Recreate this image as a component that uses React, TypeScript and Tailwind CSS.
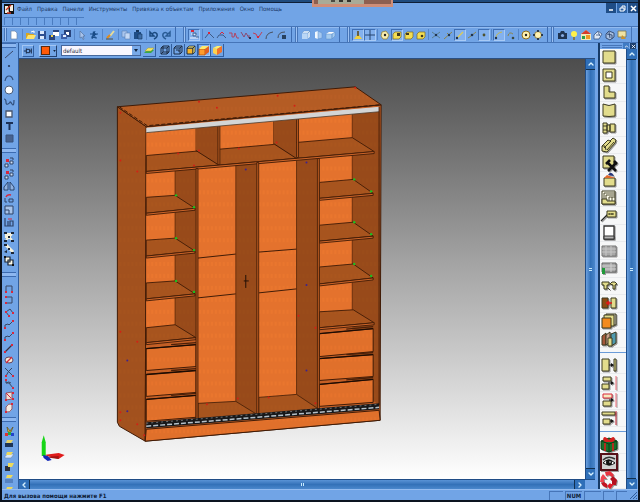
import { type ReactNode } from 'react';
import { clsx } from 'clsx';
import { ChevronDown, ChevronLeft, ChevronRight, ChevronUp } from 'lucide-react';

const menuItems = [
  'Файл',
  'Правка',
  'Панели',
  'Инструменты',
  'Привязка к объектам',
  'Приложения',
  'Окно',
  'Помощь',
];

const NAVY = '#1d3557';
const RED = '#d8283c';
const GOLD = '#f0d040';
const SAND = '#e2dc8c';
const EDGE = '#3c3a20';

// 12x12 toolbar glyphs
const icons: Record<string, ReactNode> = {
  new: <path d="M3 2h4l2 2v6H3z" fill="#fff" stroke="#6b86ab" strokeWidth=".7" />,
  open: (
    <>
      <path d="M2 4h3l1 1h4v5H2z" fill="#d8a520" />
      <path d="M4 6h8l-2 4H2z" fill="#ffe36b" />
      <path d="M7 3l3-1v2" stroke="#fff" fill="none" />
    </>
  ),
  save: (
    <>
      <path d="M2 2h8v8H2z" fill="#2c4e91" />
      <path d="M4 2h4v3H4zM4 7h4v3H4z" fill="#dce8fa" />
    </>
  ),
  saveAs: (
    <>
      <path d="M5 1h6v6H5z" fill="#fff" />
      <path d="M5 1h6v2H5z" fill="#28447c" />
      <path d="M1 6h6v5H1z" fill="#28447c" />
      <path d="M3 6h2v2H3z" fill={GOLD} />
    </>
  ),
  saveAll: (
    <>
      <path d="M4 1h7v7H4z" fill="#28447c" />
      <path d="M6 3h3v3H6z" fill="#fff" />
      <path d="M1 5h6v5H1z" fill="#3c5fa8" />
      <path d="M3 6h3v2H3z" fill="#eaf2ff" />
    </>
  ),
  cursor: <path d="M4 2l5 5H7l1 3-1 .5L6 8 4 9z" fill="#a9c4ec" stroke="#4e6b97" strokeWidth=".6" />,
  select: (
    <>
      <path d="M5 2l4 4-2 0 1 4-2-3-2 2z" fill="#184a86" />
      <path d="M2 5h8M7 2L4 10M3 8l6 1" stroke="#184a86" fill="none" />
    </>
  ),
  brush: (
    <>
      <path d="M10 2L6 7" stroke="#e8dc9a" strokeWidth="2" />
      <path d="M6 6L3 9" stroke="#e08b1e" strokeWidth="2.200" />
      <path d="M2 10h7" stroke="#473a20" strokeWidth=".8" />
    </>
  ),
  copy: (
    <>
      <path d="M2 2h5v6H2z" fill="#a8c5ee" stroke="#5d80b4" strokeWidth=".6" />
      <path d="M5 4h5v6H5z" fill="#c3d8f5" stroke="#5d80b4" strokeWidth=".6" />
    </>
  ),
  paste: (
    <>
      <path d="M2 3h7v7H2z" fill="#1e4d86" />
      <path d="M4 1h3v2H4z" fill="#16375f" />
      <path d="M6 5h4v5H6z" fill="#3f6ea8" stroke="#123257" strokeWidth=".6" />
    </>
  ),
  undo: <path d="M2 3v4h4zM4 5q3-3 5 0q1 3-3 5" fill="none" stroke="#1b4a80" strokeWidth="1.500" />,
  redo: <path d="M10 3v4H6zM8 5Q5 2 3 5q-1 3 3 5" fill="none" stroke="#2a5c96" strokeWidth="1.500" />,
  snapBar: (
    <>
      <path d="M2 9h8M3 5h3l3 2" stroke="#eef4ff" fill="none" />
      <path d="M5 4h3v3H5zM8 8h3" stroke="#36537f" fill="none" strokeWidth=".8" />
      <path d="M3 1h3v2H3z" fill={RED} />
    </>
  ),
  poly1: <><path d="M1 9l4-5 5 5" stroke="#3f5a86" fill="none" /><path d="M4 3h2v2H4z" fill={RED} /></>,
  poly2: <><path d="M1 9l2-3 2 0 2 0 3 3" stroke="#3f5a86" fill="none" /><path d="M4 5l2-2 2 2" stroke={RED} fill="none" /></>,
  poly3: <path d="M1 4l3 0v4h2l1-4 2 5h2" stroke="#b24562" fill="none" />,
  poly4: <><path d="M1 3l3 5 2-4 3 5V6" stroke="#8a4a70" fill="none" /><path d="M9 8h2v2H9z" fill={NAVY} /></>,
  poly5: <><path d="M1 4l3 1 2 4 4-6" stroke="#c04058" fill="none" /><path d="M5 7h2v2H5z" fill={RED} /></>,
  arc1: <path d="M2 10q0-6 7-7" stroke="#49515f" fill="none" />,
  arc2: <><path d="M2 9q0-6 7-6" stroke="#49515f" fill="none" /><path d="M6 6h4v4H6z" fill="#27415f" /></>,
  box1: (
    <>
      <path d="M2 4h6v6H2z" fill="#b9d6f6" />
      <path d="M2 4l2-2h6L8 4zM10 2v6l-2 2V4z" fill="#f2f9ff" stroke="#5a8cc8" strokeWidth=".5" />
    </>
  ),
  box2: (
    <>
      <path d="M3 3l3-1v8l-3-1z" fill="#f2f9ff" />
      <path d="M6 2l4 2v5l-4 1z" fill="#a5c8f0" stroke="#5a8cc8" strokeWidth=".5" />
    </>
  ),
  box3: (
    <>
      <path d="M2 5l3-2h6L8 5z" fill="#fff" />
      <path d="M2 5h6v5H2zM11 3v4l-3 3V5z" fill="#a5cbf0" stroke="#5a8cc8" strokeWidth=".5" />
    </>
  ),
  person: <><path d="M2 10h8L7 6H5z" fill={GOLD} /><path d="M6 2v5" stroke="#5b4b20" strokeWidth="1.600" /></>,
  plus: <path d="M6 1v10M1 6h10" stroke="#27456f" />,
  snapDot: <><path d="M3 3l4-1 3 4-2 4H4L2 7z" fill="#f6edb0" stroke="#8f7a22" strokeWidth=".7" /><circle cx="6" cy="6" r="1.200" fill="#222" /></>,
  snapCube: (
    <>
      <path d="M2 5l2-2h6v5l-2 2H2z" fill="#f3dd53" stroke="#7d6b20" strokeWidth=".7" />
      <path d="M6 4h3v3H6z" fill="#413a1e" />
    </>
  ),
  snapEdge: (
    <>
      <path d="M2 5l2-2h6v5l-2 2H2z" fill="#f3dd53" stroke="#7d6b20" strokeWidth=".7" />
      <path d="M3 4h3v2H3z" fill="#413a1e" />
    </>
  ),
  snapFace: (
    <>
      <path d="M2 5l2-2h6v5l-2 2H2z" fill="#f3dd53" stroke="#7d6b20" strokeWidth=".7" />
      <circle cx="7" cy="7" r="1.300" fill="#413a1e" />
    </>
  ),
  cross: <><path d="M2 3l8 6M10 3L2 9" stroke="#5c7f8c" /><circle cx="6" cy="6" r="1.200" fill="#20344f" /></>,
  perp: <><path d="M2 10l8-7M5 4l3 3" stroke="#8f8548" /><circle cx="7" cy="6" r="1.200" fill="#20344f" /></>,
  seg: <><path d="M3 9l6-6" stroke="#e0cc50" strokeWidth="1.200" /><circle cx="3" cy="9" r="1.200" fill="#20344f" /></>,
  mid: <><path d="M2 9l3-2 5-4" stroke="#8f8548" /><circle cx="6" cy="6" r="1.300" fill="#20344f" /></>,
  dot: <circle cx="6" cy="6" r="1.400" fill="#4f522e" />,
  arcSnap: <><path d="M3 9q0-5 6-6" stroke="#c7b84e" fill="none" /><circle cx="3" cy="9" r="1.200" fill="#20344f" /></>,
  arcEnd: <><path d="M3 7q1-5 5-2" stroke="#8f8548" fill="none" /><circle cx="8" cy="9" r="1.300" fill="#3d4a40" /></>,
  ring: <><circle cx="6" cy="6" r="4" fill="#fff2b0" stroke="#8c6d1f" /><circle cx="6" cy="6" r="1.200" fill="#222" /></>,
  quad: <><circle cx="6" cy="6" r="3.500" fill="#fff2b0" stroke="#8c7c3f" /><path d="M5 1h2v2H5zM5 9h2v2H5zM1 5h2v2H1zM9 5h2v2H9z" fill="#28384e" /></>,
  camera: <><path d="M2 4h2l1-2h3l1 2h2v6H2z" fill="#1f3350" /><circle cx="6.500" cy="6.500" r="1.600" fill="#86a9df" /></>,
  bulb: <><circle cx="6" cy="5" r="3" fill="#fff14a" /><path d="M5 8h2v3H5z" fill="#7d7a5a" /></>,
  palette: <><path d="M1 5l5-4 5 4v6H1z" fill="#f2e8b8" /><path d="M1 5l5-4 5 4H1z" fill="#d63a2a" /><path d="M2 7h3v3H2z" fill="#2d9c4a" /><path d="M6 6h4v4H6z" fill="#ef9a26" /></>,
  cubeSteel: <path d="M2 6l4-4 4 3-3 5-5 0zM4 6h4M6 3l2 4" fill="#dde8f7" stroke="#3d5883" strokeWidth=".8" />,
  cubeSteel2: <path d="M2 5l3-3 5 2v4l-4 3-4-2zM3 5l5 1v4M5 3l1 6" fill="#a9c0e2" stroke="#2e466e" strokeWidth=".9" />,
  lamp: <><path d="M2 2h8v6H2z" fill="#efe3a4" stroke="#7c744d" strokeWidth=".8" /><path d="M6 6l4 4H5z" fill="#c8922e" /></>,
  // drawing
  line: <path d="M2 10l8-7" stroke="#39486a" />,
  point: <circle cx="6" cy="6" r="1.100" fill="#273a5c" />,
  arc: <path d="M2 9q1-5 4-5t4 4" stroke="#33507c" fill="none" strokeWidth="1.200" />,
  circle: <circle cx="6" cy="6" r="4" fill="#fff" stroke="#4a5d7b" />,
  spline: <path d="M1 3q2 0 2 3t2 2 2-2 2 2 2-4" stroke="#33507c" fill="none" strokeWidth="1.200" />,
  rect: <path d="M3 3h6v6H3z" fill="#fff" stroke="#49566d" strokeWidth="1.300" />,
  letter: <path d="M3 3h7M6.500 3v7" stroke="#1c3156" strokeWidth="2" />,
  hatch: <path d="M3 3h7v7H3z" fill="#47628f" stroke="#38527c" />,
  move: <><path d="M2 8h3v3H2zM7 5h3v3H7z" fill="#cfe0f6" stroke="#2e4267" /><path d="M3 3h3v3H3z" fill={RED} /><path d="M7 2l3 0v2" stroke="#2e4267" fill="none" /></>,
  mirror: <><path d="M5 2v8H1V7zM7 2v8h4V7z" fill="#8fb1e0" stroke="#243c62" strokeWidth=".9" /></>,
  rotate: <><path d="M6 7h4v3H6zM2 6v4h2" fill="none" stroke="#2e4267" /><path d="M3 5q1-3 5-2" stroke={RED} fill="none" strokeWidth="1.400" /></>,
  scale: <path d="M2 2h8v8H2zM2 6h4v4" fill="#a7c3ea" stroke="#2e4267" />,
  stretch: <><path d="M2 2v8h8V5H7v5M5 10V5" fill="none" stroke="#2e4267" strokeWidth="1.200" /><path d="M5 3h4" stroke={RED} /></>,
  group: <><path d="M3 3l6 6M9 3L3 9M3 3h4v3H3z" stroke="#f5f1dc" fill="#fff" strokeWidth="2" /><path d="M1 1h3v2H1zM8 1h3v2H8zM1 9h3v2H1zM8 9h3v2H8zM5 5h2v2H5z" fill="#1c2636" /></>,
  ungroup: <><path d="M3 2l7 7" stroke="#f5f1dc" strokeWidth="3" /><path d="M1 1h3v2H1zM8 9h3v2H8zM1 9l3-2v3zM8 2l2 2M5 5h2v2H5z" fill="#1c2636" /></>,
  merge: <><path d="M2 2h5v5H2zM5 5h5v5H5z" fill="#fffbe8" stroke="#1c2636" strokeWidth="1.200" /><path d="M1 1h2v2H1zM9 9h2v2H9z" fill="#111" /></>,
  dimH: <><path d="M3 10V4h6v6" stroke="#3a4763" fill="none" /><path d="M2 9h2v2H2zM8 9h2v2H8z" fill={RED} /></>,
  dimV: <><path d="M3 3h6v6H3" stroke="#3a4763" fill="none" /><path d="M2 2h2v2H2zM2 8h2v2H2z" fill={RED} /></>,
  dimA: <><path d="M3 6l4-3 3 4M3 6l3 4" stroke="#3a4763" fill="none" /><path d="M2 5h2v2H2zM9 6h2v2H9zM5 9h2v2H5z" fill={RED} /></>,
  dimL: <><path d="M2 10V7l3-1 1 1 4-4" stroke="#3a4763" fill="none" /><path d="M1 9h2v2H1zM9 2h2v2H9z" fill={RED} /></>,
  dimR: <><path d="M2 10l7-7" stroke="#3a3040" strokeWidth="1.200" /><path d="M1 9h2v2H1zM8 2h2v2H8z" fill={RED} /></>,
  dimD: <><ellipse cx="6" cy="6" rx="4" ry="3" fill="#f5e9d4" stroke="#66435a" /><path d="M3 9l6-6" stroke={RED} strokeWidth="1.200" /></>,
  dimX: <><path d="M2 2q4 4 8 8M9 2Q5 5 3 10" stroke="#3a4763" fill="none" /><path d="M2 9h2v2H2zM9 9h2v2H9z" fill={RED} /></>,
  dimArc: <><path d="M3 2v3h3l4 5M3 5q3-2 5 0" stroke="#3a4763" fill="none" /><path d="M9 9h2v2H9zM2 1h2v2H2z" fill={RED} /></>,
  area: <><path d="M3 3l6-1v7l-6 1z" fill="#f4dcd2" stroke="#8b5666" /><path d="M2 9h2v2H2zM9 2h2v2H9zM9 8h2v2H9z" fill={RED} /><path d="M3 3l5 5" stroke={RED} /></>,
  areaCurve: <><path d="M3 5q2-4 6-3v5q-2 4-6 3z" fill="#f7eadf" stroke="#8b5666" /><path d="M2 9h2v2H2zM8 1h2v2H8z" fill={RED} /></>,
  rgb: <><path d="M4 2l3 4 3-4-2 5H5z" fill="#e8c63c" stroke="#5b4c1a" strokeWidth=".7" /><path d="M2 8h3v3H2z" fill="#d33" /><path d="M5 7h3v3H5z" fill="#2a4" /><path d="M8 8h3v3H8z" fill="#24c" /></>,
  layerDark: <><path d="M2 6h8v4H2z" fill="#1d3557" /><path d="M4 3h6L8 6H3z" fill="#e6d36a" /></>,
  layerLight: <><path d="M2 7l3-2h6L8 9H2z" fill="#d9e8fa" stroke="#6883ad" strokeWidth=".6" /><path d="M4 3h6L8 6H3z" fill="#ecd95c" /></>,
  layerLock: <><path d="M2 5h5v5H2z" fill="#2b2f3c" /><path d="M5 2h6L9 6H5z" fill="#ecd95c" /></>,
  layerBlue: <><path d="M2 6h8v4H2z" fill="#5582c2" /><path d="M4 2h6L8 5H3z" fill="#ecd95c" /></>,
  pin: <><path d="M1 6h3M4 3v6M4 4h4v4H4M10 3v6M8 6h2" stroke="#1b2c4a" fill="none" strokeWidth="1.200" /></>,
  layers: <><path d="M1 9l3-3h7L8 9z" fill="#3aa64a" /><path d="M2 7l3-3h6L8 7z" fill="#f4e86b" stroke="#a59a2a" strokeWidth=".5" /></>,
  cubeWire: <path d="M2 4h6v6H2zM4 2h6v6H4zM2 4l2-2M8 4l2-2M8 10l2-2M2 10l2-2" fill="none" stroke="#1d2c44" />,
  cubeHidden: <path d="M2 4h6v6H2zM4 2h6v6M2 4l2-2M8 4l2-2M8 10l2-2M4 6h3v2" fill="none" stroke="#1d2c44" />,
  cubeYellow: <><path d="M2 4h6v6H2z" fill="#f6b52c" stroke="#1d2c44" /><path d="M2 4l2-2h6L8 4zM10 2v6l-2 2V4z" fill="#ffe96a" stroke="#1d2c44" strokeWidth=".8" /></>,
  cubeOrange: <><path d="M1 5h6v6H1z" fill="#ff9c2c" stroke="#a3480b" strokeWidth=".7" /><path d="M1 5l3-3h7L7 5z" fill="#ffe96a" /><path d="M11 2v6l-4 3V5z" fill="#e2601d" /></>,
  cubeSoft: <><path d="M2 4l4 1v6l-4-2z" fill="#ffd24d" /><path d="M2 4l4-2h5l-5 3z" fill="#ffee6e" /><path d="M6 5l5-3v6l-5 3z" fill="#f2722a" /></>,
};

// 18x18 furniture palette glyphs
const paletteIcons: Record<string, ReactNode> = {
  panel: <path d="M3 3h12v12H3z" fill={SAND} stroke={EDGE} />,
  frame: <><path d="M3 3h12v12H3z" fill={SAND} stroke={EDGE} /><path d="M6 6h6v6H6z" fill="#fff" stroke={EDGE} /></>,
  corner: <path d="M4 3h5v6h6v6H4z" fill={SAND} stroke={EDGE} />,
  curved: <path d="M3 3q6 3 12 0v12q-6 1-12 0z" fill={SAND} stroke={EDGE} />,
  bolt: <path d="M3 4h4v10H3zM7 6h3v6H7zM10 5h5v8h-5zM3 7h4M3 11h4" fill={SAND} stroke={EDGE} />,
  profile: <path d="M2 10l6-6 2 1 3-3 3 2-1 3-8 9-5-1zM4 12l7-7M7 14l7-8M2 10l3 0 1 4" fill={SAND} stroke={EDGE} />,
  tools: <><path d="M3 2h11v12H3z" fill={SAND} stroke={EDGE} /><path d="M8 9l8 8M16 9l-8 8" stroke="#111" strokeWidth="2.500" /><path d="M6 10l4-4M14 7l3 3" stroke="#111" strokeWidth="2.500" /></>,
  drawerCap: <><path d="M4 7h11v8H4z" fill={SAND} stroke={EDGE} /><path d="M4 7l3-3 8 3z" fill="#e0682a" /><path d="M8 4q3-5 6 1z" fill="#24357c" /></>,
  maze: (
    <>
      <path d="M2 2h13v13H2z" fill="#fdfcec" stroke={EDGE} />
      <path d="M2 10h5v2h8v3H2z" fill={SAND} stroke={EDGE} />
      <path d="M4 10V4h11M6 10V6h9M9 12V8h6M12 12V8" fill="none" stroke={EDGE} strokeWidth=".9" />
    </>
  ),
  tag: <><path d="M1 14l2-2 5-5" stroke="#222" strokeWidth="1.300" fill="none" /><path d="M7 4h9v6H7z" fill={SAND} stroke={EDGE} /><path d="M9 7h5M9 6v2M12 6v2" stroke={EDGE} /></>,
  door: <><path d="M4 2h10v13H4z" fill="#fff" stroke="#333" strokeWidth="1.300" /><path d="M4 12h10v3H4z" fill="#b5b5b5" stroke="#333" /></>,
  sheet: <><path d="M2 4h14v10H2z" fill="#a8a8a8" stroke="#777" /><path d="M2 7h14M2 10h14M6 4v10M11 4v10" stroke="#c6c6c6" /></>,
  sheetMoney: <><path d="M2 4h14v9H2z" fill="#a8a8a8" stroke="#666" /><path d="M2 7h14M2 10h14M11 4v9" stroke="#d0d0d0" /><path d="M2 9h3v6H2z" fill="#1f9a3a" /></>,
  fasteners: <path d="M2 5h7v3H7v4H4V8H2zM10 7l2-2h3l2 2-2 1v4h-2V8zM8 11l2 2" fill={SAND} stroke={EDGE} />,
  replace: <><path d="M2 4h6v10H2z" fill="#8c4a14" stroke={EDGE} /><path d="M11 4h5v10h-5z" fill={SAND} stroke={EDGE} /><path d="M6 9h6M7 9l2-2M7 9l2 2" stroke="#e01818" strokeWidth="1.500" /></>,
  sheets: <><path d="M6 2h10v11H6z" fill="#c9c6b8" stroke={EDGE} /><path d="M4 3h10v11H4z" fill={SAND} stroke={EDGE} /><path d="M2 6h9v10H2z" fill="#f28a1e" stroke={EDGE} /></>,
  books: <><path d="M2 6l4-3v12H2z" fill="#a4583a" stroke={EDGE} /><path d="M6 5l4-3v10l-4 3z" fill="#c9a08c" stroke={EDGE} /><path d="M11 4l5-2v11l-5 3z" fill="#4f9bb0" stroke={EDGE} /><path d="M8 8h4v8H8z" fill={SAND} stroke={EDGE} /></>,
  alignA: <><path d="M2 3h7v12H2zM14 3h2v12h-2z" fill={SAND} stroke={EDGE} /><path d="M9 9h3" stroke="#111" /><path d="M11 7l3 2-3 2z" fill="#111" /></>,
  alignB: <><path d="M3 3h8v4H3zM2 10h7v5H2z" fill={SAND} stroke={EDGE} /><path d="M8 9h4" stroke="#111" /><path d="M11 7l3 2-3 2z" fill="#111" /><path d="M16 2v14" stroke="#ef6a76" /></>,
  alignC: <><path d="M3 10h8v5H3z" fill={SAND} stroke={EDGE} /><path d="M3 3h9v4H3z" fill="#f6e9c0" stroke={RED} /><path d="M9 9h3" stroke="#111" /><path d="M11 7l3 2-3 2z" fill="#111" /><path d="M16 2v14" stroke="#ef6a76" /></>,
  alignD: <><path d="M2 3h13v3H2zM3 10h7v5H3z" fill={SAND} stroke={EDGE} /><path d="M10 12h2" stroke="#111" /><path d="M11 10l3 2-3 2z" fill="#111" /><path d="M16 2v14" stroke="#b91a2a" /></>,
  gift: <><path d="M1 6l8-3 8 3v8l-8 3-8-3z" fill="#15702a" stroke="#0b3d17" /><path d="M1 6l8 3 8-3M9 9v8" stroke="#0b3d17" fill="none" /><path d="M5 8v8M13 8v8M4 4l5 2 5-2M9 6q-5-5-5-2t5 2q5-5 5-2t-5 2" stroke="#d61f1f" strokeWidth="1.600" fill="none" /></>,
  eye: <><path d="M1 1h16v16H1z" fill="#d2d2d2" stroke="#571018" strokeWidth="2" /><path d="M3 10q5-6 12 0q-5 4-12 0z" fill="#fff" stroke="#111" /><circle cx="9" cy="9.500" r="3" fill="#111" /><path d="M3 7q5-5 12-1" stroke="#333" strokeWidth="1.600" fill="none" /><circle cx="10" cy="9" r=".8" fill="#fff" /></>,
  recycle: (
    <>
      <path d="M5 1l5-1 4 4-2 2-3-2-3 1z" fill="#e8323e" />
      <path d="M13 5l4 4-1 5-4 0 0-4-2-2z" fill="#b3101e" />
      <path d="M14 13l-3 4-1 1-3-3 3-3 1 1z" fill="#e11c2a" />
      <path d="M7 17l-4-2-2-3 3-1 3 2z" fill="#c41421" />
      <path d="M0 11l1-5 2-3 4 5-3 0v3z" fill="#f04450" />
    </>
  ),
};

type Tool = { icon: string; label: string; pressed?: boolean };
type ToolGroup = { lead: 'none' | 'sep' | 'thin' | 'grip' | 'gripNarrow'; tools: Tool[] };

const t = (icon: string, label: string, pressed = false): Tool => ({ icon, label, pressed });

const mainToolbar: ToolGroup[] = [
  { lead: 'none', tools: [t('new', 'Создать')] },
  { lead: 'sep', tools: [t('open', 'Открыть'), t('save', 'Сохранить'), t('saveAs', 'Сохранить как'), t('saveAll', 'Сохранить все')] },
  { lead: 'sep', tools: [t('cursor', 'Курсор'), t('select', 'Выделить')] },
  { lead: 'sep', tools: [t('brush', 'Свойства')] },
  { lead: 'sep', tools: [t('copy', 'Копировать'), t('paste', 'Вставить')] },
  { lead: 'sep', tools: [t('undo', 'Отменить'), t('redo', 'Вернуть')] },
  { lead: 'grip', tools: [t('snapBar', 'Контур', true)] },
  {
    lead: 'sep',
    tools: [t('poly1', 'Ломаная'), t('poly2', 'Вершина'), t('poly3', 'Участок'), t('poly4', 'Конец'), t('poly5', 'Излом'), t('arc1', 'Дуга'), t('arc2', 'Скругление')],
  },
  { lead: 'gripNarrow', tools: [t('box1', 'Спереди'), t('box2', 'Сбоку'), t('box3', 'Сверху')] },
  { lead: 'grip', tools: [t('person', 'Привязка', true), t('plus', 'Орто', true)] },
  { lead: 'thin', tools: [t('snapDot', 'Точка'), t('snapCube', 'Грань', true), t('snapEdge', 'Ребро'), t('snapFace', 'Центр грани')] },
  { lead: 'thin', tools: [t('cross', 'Пересечение'), t('perp', 'Перпендикуляр'), t('seg', 'Отрезок', true), t('mid', 'Середина'), t('dot', 'Узел', true)] },
  { lead: 'thin', tools: [t('arcSnap', 'Дуга', true), t('arcEnd', 'Конец дуги')] },
  { lead: 'thin', tools: [t('ring', 'Центр'), t('quad', 'Квадрант')] },
  {
    lead: 'gripNarrow',
    tools: [t('camera', 'Камера'), t('bulb', 'Свет'), t('palette', 'Материалы'), t('cubeSteel', 'Тело'), t('cubeSteel2', 'Сетка'), t('lamp', 'Лампа')],
  },
];

const sideGroups: { gap: string; grip: boolean; tools: Tool[] }[] = [
  {
    gap: 'h-[5px]',
    grip: true,
    tools: [t('line', 'Линия'), t('point', 'Точка'), t('arc', 'Дуга'), t('circle', 'Окружность'), t('spline', 'Сплайн'), t('rect', 'Прямоугольник'), t('letter', 'Текст'), t('hatch', 'Штриховка')],
  },
  {
    gap: 'h-3',
    grip: true,
    tools: [t('move', 'Сдвиг'), t('move', 'Копия'), t('mirror', 'Зеркало'), t('rotate', 'Поворот'), t('scale', 'Масштаб'), t('stretch', 'Растянуть')],
  },
  { gap: 'h-[3px]', grip: false, tools: [t('group', 'Группа'), t('ungroup', 'Разбить'), t('merge', 'Объединить')] },
  {
    gap: 'h-[15px]',
    grip: true,
    tools: [
      t('dimH', 'Размер'), t('dimV', 'Вертикальный размер'), t('dimA', 'Угол'), t('dimL', 'Цепь'), t('dimL', 'Выноска'), t('dimR', 'Радиус'),
      t('dimD', 'Диаметр'), t('dimX', 'Пересечение'), t('dimArc', 'Длина дуги'), t('area', 'Площадь'), t('areaCurve', 'Контур'),
    ],
  },
  {
    gap: 'h-[11px]',
    grip: true,
    tools: [t('rgb', 'Цвета'), t('layerDark', 'Слой'), t('layerLight', 'Слои'), t('layerLock', 'Замок'), t('layerBlue', 'Активный слой'), t('layerBlue', 'Все слои')],
  },
];

const palette: string[][] = [
  ['panel', 'frame', 'corner', 'curved', 'bolt', 'profile', 'tools', 'drawerCap', 'maze', 'tag', 'door', 'sheet', 'sheetMoney', 'fasteners', 'replace', 'sheets', 'books'],
  ['alignA', 'alignB', 'alignC', 'alignD'],
  ['gift', 'eye', 'recycle'],
];

function ToolButton({ icon, label, pressed }: Tool) {
  return (
    <button
      type="button"
      aria-label={label}
      className={clsx(
        'flex size-3 shrink-0 items-center justify-center',
        pressed && 'border border-[#3f6fb4] border-r-[#a9cbf6] border-b-[#a9cbf6] bg-[#83b1ee]',
      )}
    >
      <svg viewBox="0 0 12 12" className="size-3 shrink-0" fill="none">
        {icons[icon]}
      </svg>
    </button>
  );
}

function Lead({ kind }: { kind: ToolGroup['lead'] }) {
  if (kind === 'none') return null;
  if (kind === 'sep' || kind === 'thin') {
    return (
      <div className={clsx('flex shrink-0 justify-center py-0.5', kind === 'sep' ? 'w-1' : 'w-[3px]')}>
        <div className="w-px bg-[#5585c8]" />
      </div>
    );
  }
  return (
    <div className={clsx('flex shrink-0 justify-between pl-[3px] pr-0.5', kind === 'grip' ? 'w-4' : 'w-3')}>
      <div className="w-px bg-[#3c6bb0]" />
      <div className="w-[3px] border-x border-[#4675b8] bg-[#9cc2f4]" />
    </div>
  );
}

function ScrollButton({ dir, label }: { dir: 'up' | 'down' | 'left' | 'right'; label: string }) {
  const Arrow = { up: ChevronUp, down: ChevronDown, left: ChevronLeft, right: ChevronRight }[dir];
  return (
    <button
      type="button"
      aria-label={label}
      className="flex size-[10px] shrink-0 items-center justify-center bg-[#2f6fb8] text-[#d8f2ff]"
    >
      <Arrow className="size-2" strokeWidth={4} />
    </button>
  );
}

function VerticalScroll() {
  return (
    <div className="flex w-[10px] shrink-0 flex-col border-l border-[#1f4c86] bg-[#6d9bd8]">
      <ScrollButton dir="up" label="Прокрутить вверх" />
      <div className="flex flex-1 items-center justify-center border-y border-[#12304f] bg-linear-to-r from-[#6a9fde] via-[#3371b8] to-[#4a87cc]">
        <div className="size-[3px] border-y border-[#c9ecff]" />
      </div>
      <ScrollButton dir="down" label="Прокрутить вниз" />
    </div>
  );
}

// Points are top-left, top-right, bottom-right, bottom-left
type Quad = [number, number, number, number, number, number, number, number];

const backPanels: Quad[] = [
  [145, 131, 195, 127, 195, 152, 145, 156],
  [219, 125, 273, 120, 273, 145, 219, 150],
  [298, 118, 352, 113, 352, 138, 298, 142],
  [145, 172, 174, 170, 174, 326, 145, 329],
  [197, 167, 235, 164, 235, 402, 197, 405],
  [258, 163, 296, 160, 296, 395, 258, 399],
  [319, 157, 352, 154, 352, 310, 319, 313],
];

const innerSides: Quad[] = [
  [195, 127, 217, 125, 217, 164, 195, 150],
  [273, 120, 296, 118, 296, 158, 273, 144],
  [352, 113, 379, 111, 379, 405, 352, 390],
  [174, 170, 195, 168, 195, 340, 174, 325],
  [235, 164, 256, 162, 256, 416, 235, 402],
  [296, 160, 317, 158, 317, 409, 296, 395],
];

// Left edge, back line, then front corner of every shelf
const shelves: Quad[] = [
  [145, 155, 352, 137, 374, 151, 145, 171],
  [145, 197, 174, 195, 194, 208, 145, 213],
  [145, 240, 174, 238, 194, 251, 145, 256],
  [145, 283, 174, 281, 194, 294, 145, 299],
  [145, 328, 174, 325, 195, 338, 145, 343],
  [319, 182, 353, 179, 373, 193, 319, 198],
  [319, 225, 353, 222, 373, 236, 319, 241],
  [319, 267, 353, 264, 373, 278, 319, 284],
  [319, 312, 353, 310, 374, 323, 319, 328],
];

const drawers: Quad[] = [
  [145, 349, 195, 345, 195, 367, 145, 371],
  [145, 375, 195, 371, 195, 393, 145, 397],
  [145, 400, 195, 396, 195, 418, 145, 422],
  [319, 334, 373, 329, 373, 352, 319, 357],
  [319, 359, 373, 355, 373, 377, 319, 381],
  [319, 385, 373, 380, 373, 403, 319, 407],
];

const posts: Quad[] = [
  [217, 125, 219, 125, 219, 164, 217, 164],
  [296, 118, 298, 118, 298, 157, 296, 157],
  [195, 168, 197, 168, 197, 421, 195, 421],
  [256, 162, 258, 162, 258, 415, 256, 415],
  [317, 158, 319, 158, 319, 410, 317, 410],
];

const greenDots = [[175, 195], [193, 207], [175, 238], [193, 250], [175, 281], [193, 292], [354, 179], [371, 191], [354, 222], [371, 234], [354, 264], [371, 276]];
const redDots = [[119, 112], [216, 107], [198, 101], [277, 95], [294, 105], [355, 87], [119, 160], [136, 171], [177, 153], [193, 165], [198, 150], [238, 148], [276, 142], [119, 332], [136, 342], [119, 413], [119, 421], [136, 425], [143, 436], [206, 405], [237, 399], [298, 316], [315, 328], [268, 398], [315, 404]];
const blueDots = [[245, 169], [306, 162], [306, 285], [126, 361], [126, 412], [306, 371]];

function Wardrobe() {
  const line = '#3d1a06';
  return (
    <g strokeLinejoin="round">
      <polygon points="116,106 145,126 144,442 118,427 116,423" fill="#a5531e" stroke={line} />
      <polygon points="145,126 381,104 380,421 144,442" fill="#c76126" stroke={line} />
      {innerSides.map((q) => (
        <polygon key={q.join()} points={q.join(' ')} fill="#9a4c1a" />
      ))}
      {backPanels.map((q) => (
        <polygon key={q.join()} points={q.join(' ')} fill="#ea762e" />
      ))}

      {/* floors of the two hanging bays */}
      <polygon points="197,404 235,402 256,415 256,418 197,422" fill="#aa561e" stroke={line} strokeWidth=".8" />
      <polygon points="258,398 296,395 317,409 317,413 258,417" fill="#aa561e" stroke={line} strokeWidth=".8" />
      <path d="M197 258l38-4M197 298l38-4M258 252l38-3M258 293l38-4" stroke={line} />
      <path d="M235 164v238M296 160v235M352 113v24M352 154v156M174 170v155M195 127v24M273 120v23" stroke="#542508" strokeWidth=".8" />

      {shelves.map((q) => {
        const [lx, , , , rx, ry, , fy] = q;
        return (
          <g key={q.join()} stroke={line} strokeWidth=".9">
            <polygon points={q.join(' ')} fill="#aa561e" />
            <polygon points={`${lx},${fy} ${rx},${ry} ${rx},${ry + 2} ${lx},${fy + 2}`} fill="#d2682a" />
          </g>
        );
      })}
      <polygon points="195,127 217,125 217,164 195,150" fill="#9a4c1a" />
      <polygon points="273,120 296,118 296,158 273,144" fill="#9a4c1a" />
      <path d="M195 150l22 14M273 143l23 15" stroke={line} />

      {drawers.map((q) => {
        const [lx, ly, rx, ry] = q;
        const half = (lx + rx) / 2;
        return (
          <g key={q.join()}>
            <polygon points={q.join(' ')} fill="#e6732c" stroke={line} />
            <path d={`M${lx} ${ly}L${rx} ${ry}`} stroke="#190a02" strokeWidth="1.300" />
            <path d={`M${half} ${(ly + ry) / 2 - 2}L${rx} ${ry - 2}`} stroke="#4a1f07" strokeWidth="1.300" />
          </g>
        );
      })}
      {posts.map((q) => (
        <polygon key={q.join()} points={q.join(' ')} fill="#b4581f" stroke={line} strokeWidth=".8" />
      ))}
      <polygon points="145,430 379,411 380,421 144,442" fill="#e6732c" stroke={line} />
      <polygon points="116,106 355,86 381,104 145,126" fill="#b85e25" stroke={line} />

      <polygon points="116,106 355,86 381,104 380,421 144,442 118,427 116,423" fill="url(#grain)" />

      {/* sliding door rails */}
      <path d="M118 106l28 19L380 104" stroke={line} strokeDasharray="4 2" fill="none" />
      <polygon points="145,127 379,106 379,111 145,132" fill="#d3d5d6" />
      <path d="M145 132L379 111" stroke="#4c3a2c" strokeWidth=".8" />
      <path d="M379 106v300" stroke={line} />
      <polygon points="145,423 379,404 379,410 145,429" fill="#17181a" />
      <path d="M145 427L379 408" stroke="#b5c0c8" strokeWidth="1.500" strokeDasharray="5 2" />
      <path d="M145 424L379 405" stroke="#6d7174" strokeDasharray="2 3" />

      {redDots.map(([x, y]) => <circle key={`${x}-${y}`} cx={x} cy={y} r="1" fill="#d42015" />)}
      {greenDots.map(([x, y]) => <circle key={`${x}-${y}`} cx={x} cy={y} r="1.200" fill="#18c322" />)}
      {blueDots.map(([x, y]) => <circle key={`${x}-${y}`} cx={x} cy={y} r="1" fill="#3c2391" />)}
      <path d="M245 275v13M243 281h5" stroke="#221006" />
    </g>
  );
}

function Viewport() {
  return (
    <div className="min-w-0 flex-1 bg-linear-to-b from-[#4d4d4d] via-[#a6a6a6] to-white">
      <svg viewBox="19 58 565 422" className="size-full" fill="none" role="img" aria-label="Шкаф">
        <defs>
          <pattern id="grain" width="4" height="12" patternUnits="userSpaceOnUse">
            <path d="M1 0v12M3 2v8" stroke="#6a2c08" strokeOpacity=".09" strokeWidth="1" />
          </pattern>
        </defs>
        <Wardrobe />
        {/* axis marker */}
        <path d="M42 456l15-2 6 2-6 4z" fill="#e01b1b" />
        <path d="M42 458l15-1v3z" fill="#a01313" />
        <path d="M40 457V443l2-7 2 7v14z" fill="#16d516" />
        <path d="M41 456l5 1 4 4-4 1-4-3z" fill="#1327b8" />
      </svg>
    </div>
  );
}

function WindowButtons() {
  return (
    <div className="ml-auto flex shrink-0 gap-px self-start">
      <button type="button" aria-label="Свернуть" className="flex size-[10px] items-center justify-center bg-[#1f4d86]">
        <svg viewBox="0 0 9 9" className="size-[9px]"><path d="M2 6h4" stroke="#fff" strokeWidth="1.500" /></svg>
      </button>
      <button type="button" aria-label="Восстановить" className="flex size-[10px] items-center justify-center bg-[#2c62a4]">
        <svg viewBox="0 0 9 9" className="size-[9px]" fill="none"><path d="M2 4h4v3H2zM4 4V2h3v4H6" stroke="#fff" /></svg>
      </button>
      <button type="button" aria-label="Закрыть" className="flex size-[10px] items-center justify-center bg-[#1f4d86]">
        <svg viewBox="0 0 9 9" className="size-[9px]"><path d="M2 2l5 5M7 2L2 7" stroke="#fff" strokeWidth="1.500" /></svg>
      </button>
    </div>
  );
}

function MenuBar() {
  return (
    <header className="bg-[#71a4e6] pl-0.5">
      <nav className="flex h-[11px] items-center">
        <svg viewBox="0 0 10 10" className="mr-[3px] size-[10px] shrink-0">
          <path d="M0 0h10v10H0z" fill="#111" />
          <path d="M1 2h3l1 7H1zM6 1h3v6H6z" fill="#f4eee0" />
          <path d="M2 6l5-5M3 9h4" stroke="#c8321e" strokeWidth="1.300" />
        </svg>
        <div className="flex gap-[5px]">
          {menuItems.map((item) => (
            <button key={item} type="button" className="whitespace-nowrap text-[6px] leading-[10px] text-[#1c3a68]">
              {item}
            </button>
          ))}
        </div>
        <WindowButtons />
      </nav>
      <div className="flex h-3 items-center pt-px">
        {Array.from({ length: 10 }).map((_, i) => (
          <div key={i} className="size-2 border-t border-l border-[#4a7cc0]" />
        ))}
      </div>
    </header>
  );
}

function MainToolbar() {
  return (
    <div className="flex h-[17px] items-center overflow-hidden border-y border-t-[#4675b8] border-b-[#4675b8] bg-[#71a4e6] shadow-[inset_0_1px_0_#93bbf0]">
      <div className="flex h-full w-[6px] shrink-0 justify-center py-px">
        <div className="w-[3px] border-x border-[#4675b8] bg-[#9cc2f4]" />
      </div>
      {mainToolbar.map((group, i) => (
        <div key={i} className="flex h-full shrink-0 items-stretch">
          <Lead kind={group.lead} />
          <div className="flex items-center">
            {group.tools.map((tool, j) => (
              <ToolButton key={j} {...tool} />
            ))}
          </div>
        </div>
      ))}
      <div className="ml-[3px] h-full w-px shrink-0 bg-[#4675b8]" />
    </div>
  );
}

function LayerToolbar() {
  return (
    <div className="flex h-4 shrink-0 items-center border-b border-[#2b4f82] bg-[#71a4e6] pl-[3px]">
      <button type="button" aria-label="Закрепить" className="flex size-3 items-center justify-center border border-[#a3c6f4] border-r-[#315e9e] border-b-[#315e9e]">
        <svg viewBox="0 0 12 12" className="size-[10px] shrink-0" fill="none">{icons.pin}</svg>
      </button>
      <button type="button" aria-label="Цвет" className="ml-[5px] flex h-3 w-[18px] items-center gap-[3px] border border-[#a3c6f4] border-r-[#23416f] border-b-[#23416f] pl-px">
        <span className="size-[9px] border border-[#5a2a10] bg-[#ff5a0a]" />
        <svg viewBox="0 0 4 3" className="h-[2px] w-[3px]"><path d="M0 0h4L2 3z" fill="#10233f" /></svg>
      </button>
      <div className="relative ml-1 h-[11px] w-20">
        <select
          aria-label="Слой"
          defaultValue="default"
          className="block h-full w-full appearance-none border border-[#46679c] bg-[#f7f6ff] pl-px text-[6px] leading-[9px] text-[#23283a]"
        >
          <option value="default">default</option>
        </select>
        <span className="pointer-events-none absolute top-px right-px flex h-[9px] w-2 items-center justify-center bg-[#78a9e8]">
          <svg viewBox="0 0 4 3" className="h-[3px] w-1"><path d="M0 0h4L2 3z" fill="#10233f" /></svg>
        </span>
      </div>
      <div className="ml-0.5 flex border-r border-b border-[#315e9e]">
        <ToolButton icon="layers" label="Слои" />
      </div>
      <div className="ml-[3px] flex [&>*]:border-r [&>*]:border-b [&>*]:border-[#315e9e]">
        <div><ToolButton icon="cubeWire" label="Каркас" /></div>
        <div><ToolButton icon="cubeHidden" label="Без невидимых линий" /></div>
        <div><ToolButton icon="cubeYellow" label="Грани" /></div>
        <div><ToolButton icon="cubeOrange" label="Заливка" pressed /></div>
        <div><ToolButton icon="cubeSoft" label="Текстура" /></div>
      </div>
    </div>
  );
}

function SideToolbar() {
  return (
    <aside className="flex w-[17px] shrink-0 flex-col items-center overflow-hidden border-r border-[#2f5c9c] bg-[#71a4e6]">
      {sideGroups.map((group, i) => (
        <div key={i} className="flex w-full flex-col items-center pr-0.5">
          <div className={clsx('flex w-full shrink-0 flex-col justify-center', group.gap)}>
            {group.grip && <div className="h-[5px] border-y border-[#3c6bb0] bg-[#8db7f0]" />}
          </div>
          {group.tools.map((tool, j) => (
            <ToolButton key={j} {...tool} />
          ))}
        </div>
      ))}
    </aside>
  );
}

function PalettePanel() {
  return (
    <aside className="flex w-10 shrink-0 flex-col border-l-2 border-[#173a66] bg-[#71a4e6] pr-0.5">
      <div className="flex h-[6px] shrink-0 items-center gap-px pl-0.5">
        <div className="h-[3px] flex-1 border-y border-[#4675b8]" />
        <button type="button" aria-label="Свернуть панель" className="flex size-[6px] items-center justify-center bg-[#3f7bc4] text-white">
          <ChevronUp className="size-[5px]" strokeWidth={4} />
        </button>
        <button type="button" aria-label="Закрыть панель" className="flex size-[6px] items-center justify-center bg-[#1b3e6d]">
          <svg viewBox="0 0 6 6" className="size-[5px]"><path d="M1 1l4 4M5 1L1 5" stroke="#fff" /></svg>
        </button>
      </div>
      <div className="flex min-h-0 flex-1">
        <div className="flex min-w-0 flex-1 flex-col bg-[#f6f7f8]">
          {palette.map((group, i) => [
            i > 0 && (
              <div key={`sep-${i}`} className="flex h-[9px] shrink-0 items-center">
                <div className="h-px w-full bg-[#6a9bd8]" />
              </div>
            ),
            ...group.map((icon) => (
              <button
                key={icon}
                type="button"
                aria-label={icon}
                className="flex min-h-0 w-full flex-1 items-center border-b border-[#e9ebee]"
              >
                <svg viewBox="0 0 18 18" className="size-[18px] shrink-0 drop-shadow-[1px_1px_0_#9a9a9a]" fill="none">
                  {paletteIcons[icon]}
                </svg>
              </button>
            )),
          ])}
        </div>
        <VerticalScroll />
      </div>
    </aside>
  );
}

function StatusBar() {
  const cell = 'h-[9px] border-t border-l border-[#4675b8]';
  return (
    <footer className="flex h-[11px] shrink-0 items-center gap-0.5 border-t border-[#93bbf0] bg-[#71a4e6] pr-px pl-0.5">
      <span className="flex-1 whitespace-nowrap text-[6px] leading-[9px] font-bold text-[#0d1c36]">
        Для вызова помощи нажмите F1
      </span>
      <div className={clsx(cell, 'w-[14px]')} />
      <div className={clsx(cell, 'flex w-[17px] items-center justify-center text-[6px] leading-[8px] font-bold text-[#0d1c36]')}>
        NUM
      </div>
      <div className={clsx(cell, 'w-[17px]')} />
      <div className={clsx(cell, 'w-[11px]')} />
      <div className={clsx(cell, 'w-[11px]')} />
      <svg viewBox="0 0 8 8" className="size-2"><path d="M1 8l7-7M4 8l4-4M7 8l1-1" stroke="#2f5c9c" /></svg>
    </footer>
  );
}

export default function App() {
  return (
    <div className="relative flex h-screen w-full flex-col overflow-hidden border-x-2 border-b-2 border-[#0c1420] bg-[#71a4e6] font-['DejaVu_Sans_Condensed','DejaVu_Sans',sans-serif]">
      <div className="h-[3px] shrink-0 border-b border-[#0f1f36] bg-[#1f4b7d]" />
      {/* photo window hanging over the title bar */}
      <div className="absolute top-0 left-[310px] z-10 flex h-[7px] w-[81px] border-x-2 border-b-[3px] border-[#cf8e78] bg-[#8d5f50] pl-1">
        <div className="flex h-1 w-[46px] items-start justify-center gap-1 bg-[#a9ab98]">
          <span className="h-0.5 w-1 bg-[#4b4a42]" />
          <span className="h-0.5 w-1 bg-[#33322d]" />
          <span className="h-0.5 w-1 bg-[#33322d]" />
        </div>
      </div>

      <MenuBar />
      <MainToolbar />

      <div className="flex min-h-0 flex-1">
        <SideToolbar />
        <main className="flex min-w-0 flex-1 flex-col">
          <LayerToolbar />
          <div className="flex min-h-0 flex-1">
            <Viewport />
            <VerticalScroll />
          </div>
          <div className="flex h-[10px] shrink-0 border-t border-[#1f4c86] pr-[10px]">
            <ScrollButton dir="left" label="Прокрутить влево" />
            <div className="flex flex-1 items-center justify-center border-x border-[#12304f] bg-linear-to-b from-[#5a93d6] via-[#3371b8] to-[#4a87cc]">
              <div className="size-[3px] border-x border-[#c9ecff]" />
            </div>
            <ScrollButton dir="right" label="Прокрутить вправо" />
          </div>
        </main>
        <div className="w-[3px] shrink-0 bg-[#71a4e6]" />
        <PalettePanel />
      </div>

      <StatusBar />
    </div>
  );
}
